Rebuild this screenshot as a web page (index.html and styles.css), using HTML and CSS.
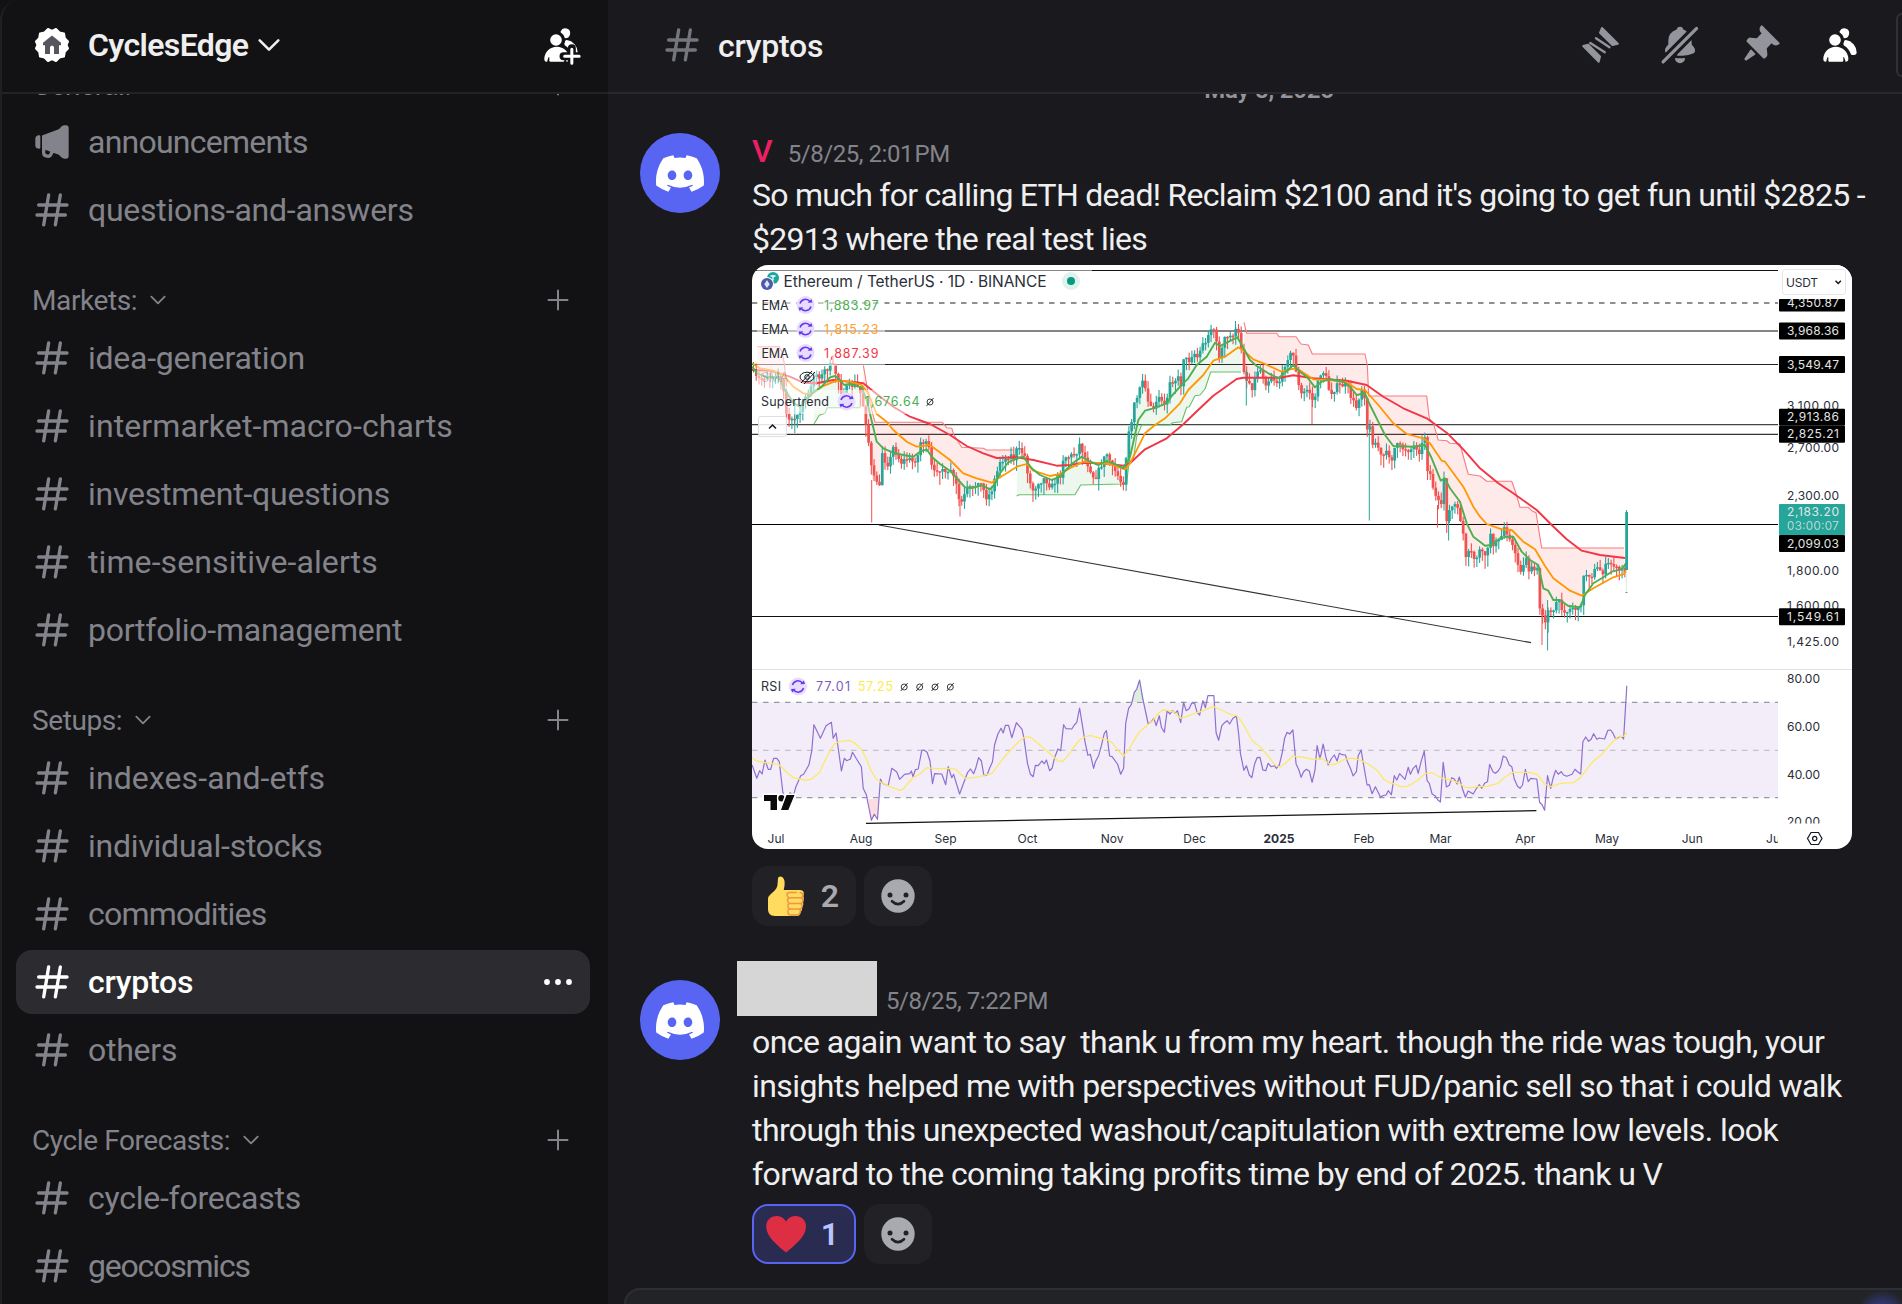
FILE: index.html
```html
<!DOCTYPE html>
<html lang="en">
  <head>
    <meta charset="utf-8">
    <title>CyclesEdge - cryptos</title>
    <link rel="stylesheet" href="styles.css">
  </head>
  <body>
    <!-- shared icons -->
    <svg class="defs" width="0" height="0">
      <symbol id="hash" viewBox="0 0 24 24"><path fill-rule="evenodd" d="M10.99 3.16A1 1 0 1 0 9 2.84L8.15 8H4a1 1 0 0 0 0 2h3.82l-.67 4H3a1 1 0 1 0 0 2h3.82l-.8 4.84a1 1 0 0 0 1.97.32L8.85 16h4.97l-.8 4.84a1 1 0 0 0 1.97.32l.86-5.16H20a1 1 0 1 0 0-2h-3.82l.67-4H21a1 1 0 1 0 0-2h-3.82l.8-4.84a1 1 0 1 0-1.97-.32L15.15 8h-4.97l.8-4.84ZM14.15 14l.67-4H9.85l-.67 4h4.97Z"/></symbol>
      <symbol id="horn" viewBox="0 0 24 24"><path fill-rule="evenodd" d="M19.56 2a3 3 0 0 0-2.46 1.28 3.85 3.85 0 0 1-1.86 1.42l-8.9 3.18a.5.5 0 0 0-.34.47v10.09a3 3 0 0 0 2.27 2.9l.62.16c1.57.4 3.15-.56 3.55-2.12a.92.92 0 0 1 1.23-.63l2.36.94c.42.27.79.62 1.07 1.03A3 3 0 0 0 19.56 22h.94c.83 0 1.5-.67 1.5-1.5v-17c0-.83-.67-1.5-1.5-1.5h-.94Zm-8.53 15.8L8 16.7v1.73a1 1 0 0 0 .76.97l.62.15c.5.13 1-.17 1.12-.67.1-.41.29-.78.53-1.1Z"/><path d="M2 10c0-1.1.9-2 2-2h.5c.28 0 .5.22.5.5v7a.5.5 0 0 1-.5.5H4a2 2 0 0 1-2-2v-4Z"/></symbol>
      <symbol id="members" viewBox="0 0 24 24"><path d="M14.5 8a3 3 0 1 0-2.7-4.3c-.2.4.06.86.44 1.12a5 5 0 0 1 2.14 3.08c.01.06.06.1.12.1ZM18.44 17.27c.15.43.54.73 1 .73h1.06c.83 0 1.5-.67 1.5-1.5a7.5 7.5 0 0 0-6.5-7.43c-.55-.08-.99.38-1.1.92-.06.3-.15.6-.26.87-.23.58-.05 1.3.47 1.63a9.53 9.53 0 0 1 3.83 4.78ZM12.5 9a3.5 3.5 0 1 1-7 0 3.5 3.5 0 0 1 7 0ZM2 20.5a7.5 7.5 0 0 1 15 0c0 .83-.67 1.5-1.5 1.5a.2.2 0 0 1-.2-.16c-.2-.96-.56-1.87-.88-2.54-.1-.23-.42-.15-.42.1v2.1a.5.5 0 0 1-.5.5h-8a.5.5 0 0 1-.5-.5v-2.1c0-.25-.31-.33-.42-.1-.32.67-.67 1.58-.88 2.54a.2.2 0 0 1-.2.16A1.5 1.5 0 0 1 2 20.5Z"/></symbol>
      <symbol id="plus" viewBox="0 0 24 24"><path d="M12 2.500v19M2.500 12h19" fill="none" stroke="currentColor" stroke-width="2" stroke-linecap="round"/></symbol>
      <symbol id="chevron" viewBox="0 0 24 24"><path d="M4 8l8 8 8-8" fill="none" stroke="currentColor" stroke-width="2.200" stroke-linecap="round" stroke-linejoin="round"/></symbol>
      <symbol id="discord" viewBox="0 0 127.14 96.36"><path d="M107.7,8.07A105.15,105.15,0,0,0,81.47,0a72.06,72.06,0,0,0-3.36,6.83A97.68,97.68,0,0,0,49,6.83,72.37,72.37,0,0,0,45.64,0,105.89,105.89,0,0,0,19.39,8.09C2.79,32.65-1.71,56.6.54,80.21h0A105.73,105.73,0,0,0,32.71,96.36,77.7,77.7,0,0,0,39.6,85.25a68.42,68.42,0,0,1-10.85-5.18c.91-.66,1.8-1.34,2.66-2a75.57,75.57,0,0,0,64.32,0c.87.71,1.76,1.39,2.66,2a68.68,68.68,0,0,1-10.87,5.19,77,77,0,0,0,6.89,11.1A105.25,105.25,0,0,0,126.6,80.22h0C129.24,52.84,122.09,29.11,107.7,8.07ZM42.45,65.69C36.18,65.69,31,60,31,53s5-12.74,11.43-12.74S54,46,53.89,53,48.84,65.69,42.45,65.69Zm42.24,0C78.41,65.69,73.25,60,73.25,53s5-12.74,11.44-12.74S96.23,46,96.12,53,91.08,65.69,84.69,65.69Z"/></symbol>
      <symbol id="smile" viewBox="-20 -20 40 40"><circle r="16.700" fill="#a9a9b0"/><g fill="#222226"><circle cx="-8" cy="-1" r="2.500"/><circle cx="8" cy="-1" r="2.500"/></g><path d="M-6 5.200Q0 11 6 5.200" fill="none" stroke="#222226" stroke-width="2.600" stroke-linecap="round"/></symbol>
      <symbol id="sync" viewBox="-10 -10 20 20"><circle r="9" fill="#e6dcfd"/><path d="M-5.500-1.500A5.600 5.600 0 0 1 4.500-3.200M5.500 1.500A5.600 5.600 0 0 1-4.500 3.200" fill="none" stroke="#6a35f0" stroke-width="1.500"/><path d="M7-2.500l-4.800.2 3.600-3.600zM-7 2.500l4.800-.2-3.600 3.600z" fill="#6a35f0"/></symbol>
    </svg>

    <div class="app">
      <nav class="sidebar">
        <header class="server">
          <svg class="badge" viewBox="0 0 36 36">
            <path fill="#fff" stroke="#fff" stroke-width="2" stroke-linejoin="round" d="M14 2l4 2 4-2 3.500 3.500 4.500 1 .8 4.700L34 14.500 32.500 18l1.500 3.500-3.200 3.300-.8 4.700-4.500 1L22 34l-4-2-4 2-3.500-3.500-4.500-1-.8-4.700L2 21.500 3.500 18 2 14.500l3.200-3.300.8-4.700 4.500-1z"/>
            <path fill="#55555f" d="M18 8.500l9 7.300v2.400h-2V27h-5v-6.500c0-2.300-4-2.300-4 0V27h-5v-8.800H9v-2.400z"/>
          </svg>
          <span class="server-name">CyclesEdge</span>
          <svg class="server-chevron"><use href="#chevron"/></svg>
          <svg class="icon invite" viewBox="0 0 24 24">
            <mask id="cut"><rect width="24" height="24" fill="#fff"/><path d="M18.500 14v10M13.500 18.700h10" stroke="#000" stroke-width="4.800" stroke-linecap="round"/></mask>
            <use href="#members" mask="url(#cut)"/>
            <path d="M18.500 14.500v8.500M14.200 18.700h8.700" stroke="currentColor" stroke-width="1.800" stroke-linecap="round"/>
          </svg>
        </header>
        <div class="channels">
          <div class="category"><span>General:</span><svg class="cat-chevron"><use href="#chevron"/></svg><svg class="add"><use href="#plus"/></svg></div>
          <a class="channel tight"><svg class="icon"><use href="#horn"/></svg>announcements</a>
          <a class="channel"><svg class="icon"><use href="#hash"/></svg>questions-and-answers</a>

          <div class="category"><span>Markets:</span><svg class="cat-chevron"><use href="#chevron"/></svg><svg class="add"><use href="#plus"/></svg></div>
          <a class="channel"><svg class="icon"><use href="#hash"/></svg>idea-generation</a>
          <a class="channel wide"><svg class="icon"><use href="#hash"/></svg>intermarket-macro-charts</a>
          <a class="channel"><svg class="icon"><use href="#hash"/></svg>investment-questions</a>
          <a class="channel wide"><svg class="icon"><use href="#hash"/></svg>time-sensitive-alerts</a>
          <a class="channel"><svg class="icon"><use href="#hash"/></svg>portfolio-management</a>

          <div class="category"><span>Setups:</span><svg class="cat-chevron"><use href="#chevron"/></svg><svg class="add"><use href="#plus"/></svg></div>
          <a class="channel wide"><svg class="icon"><use href="#hash"/></svg>indexes-and-etfs</a>
          <a class="channel"><svg class="icon"><use href="#hash"/></svg>individual-stocks</a>
          <a class="channel tight"><svg class="icon"><use href="#hash"/></svg>commodities</a>
          <a class="channel active"><svg class="icon"><use href="#hash"/></svg>cryptos
            <svg class="more" viewBox="0 0 28 8"><circle cx="3" cy="4" r="2.900"/><circle cx="14" cy="4" r="2.900"/><circle cx="25" cy="4" r="2.900"/></svg></a>
          <a class="channel"><svg class="icon"><use href="#hash"/></svg>others</a>

          <div class="category"><span>Cycle Forecasts:</span><svg class="cat-chevron"><use href="#chevron"/></svg><svg class="add"><use href="#plus"/></svg></div>
          <a class="channel"><svg class="icon"><use href="#hash"/></svg>cycle-forecasts</a>
          <a class="channel tighter"><svg class="icon"><use href="#hash"/></svg>geocosmics</a>
        </div>
      </nav>

      <main class="chat">
        <header class="topbar">
          <svg class="icon muted"><use href="#hash"/></svg>
          <h1>cryptos</h1>
          <div class="tools">
            <svg class="icon" viewBox="4 4 40 40">
              <g stroke="currentColor" stroke-linejoin="round" stroke-linecap="round">
                <path stroke-width="2" d="M26 7l15.800 15.800-5.300 1.200L24 11.800zM7.200 25l15.500 15.800 1.300-5.300-11.800-11.700z"/>
                <path fill="none" stroke-width="2.300" d="M20 17.200l13.500 9M14.300 22l14.500 9.200"/>
              </g>
            </svg>
            <svg class="icon" viewBox="0 0 24 24"><path d="M1.300 21.300a1 1 0 1 0 1.400 1.400l20-20a1 1 0 0 0-1.400-1.400l-20 20ZM3.130 16.130c.11.27.46.28.66.08L15.730 4.270a.47.47 0 0 0-.07-.74 6.970 6.970 0 0 0-1.350-.64.62.62 0 0 1-.38-.43 2 2 0 0 0-3.860 0 .62.62 0 0 1-.38.43A7 7 0 0 0 5 9.500v2.090a.5.5 0 0 1-.13.33l-1.100 1.220A3 3 0 0 0 3 15.150v.28c0 .24.04.48.13.7ZM18.640 9.360c.13-.13.36-.05.36.14v2.090c0 .12.05.24.13.33l1.100 1.220a3 3 0 0 1 .77 2.010v.28c0 .67-.34 1.290-.95 1.560-1.310.6-4 1.510-8.050 1.510-.46 0-.9-.01-1.330-.03a.48.48 0 0 1-.3-.83l8.270-8.280ZM9.180 19.840A.16.16 0 0 0 9 20a3 3 0 1 0 6 0c0-.1-.09-.17-.18-.16a24.840 24.840 0 0 1-5.640 0Z"/></svg>
            <svg class="icon" viewBox="0 0 24 24"><path d="M19.380 11.380a3 3 0 0 0 4.240 0l.03-.03a.5.5 0 0 0 0-.7L13.350.35a.5.5 0 0 0-.7 0l-.03.03a3 3 0 0 0 0 4.240L13 5l-2.920 2.920-3.650-.34a2 2 0 0 0-1.600.58l-.62.63a1 1 0 0 0 0 1.420l9.580 9.580a1 1 0 0 0 1.420 0l.63-.63a2 2 0 0 0 .58-1.600l-.34-3.640L19 11l.38.38ZM9.070 17.070a.5.5 0 0 1-.08.77l-5.150 3.430a.5.5 0 0 1-.63-.06l-.42-.42a.5.5 0 0 1-.06-.63L6.160 15a.5.5 0 0 1 .77-.08l2.140 2.140Z"/></svg>
            <svg class="icon on"><use href="#members"/></svg>
            <div class="search"></div>
          </div>
        </header>

        <section class="messages">
          <div class="divider">May 8, 2025</div>

          <article class="message">
            <div class="avatar"><svg><use href="#discord"/></svg></div>
            <div class="body">
              <div class="meta"><span class="author">V</span><time>5/8/25, 2:01 <span class="pm">PM</span></time></div>
              <p class="short">So much for calling ETH dead! Reclaim $2100 and it's going to get fun until $2825 -<br>$2913 where the real test lies</p>

              <svg class="chart" viewBox="752 265 1100 584">
                <g id="plot"></g>

                <!-- legend -->
                <g fill="#fff" fill-opacity=".5">
                  <rect x="757" y="268" width="335" height="25"/>
                  <rect x="757" y="294" width="128" height="72"/>
                  <rect x="757" y="366" width="60" height="24"/>
                  <rect x="757" y="390" width="183" height="24"/>
                </g>
                <circle cx="773" cy="278" r="6" fill="#1ba79b"/>
                <path d="M770.500 276h5M773 276v4.500" stroke="#fff" stroke-width="1.300"/>
                <circle cx="767" cy="284" r="7" fill="#fff"/>
                <circle cx="767" cy="284" r="6" fill="#4d5aa8"/>
                <path d="M767 280l2.700 4.200-2.700 3.800-2.700-3.800z" fill="#dfe3fa"/>
                <text class="pair" x="783.500" y="287" textLength="263">Ethereum / TetherUS · 1D · BINANCE</text>
                <circle cx="1071" cy="281" r="9" fill="#dff2ee"/><circle cx="1071" cy="281" r="4" fill="#089981"/>

                <g class="legend">
                  <text x="761.500" y="310" textLength="27">EMA</text>
                  <text x="761.500" y="334" textLength="27">EMA</text>
                  <text x="761.500" y="358" textLength="27">EMA</text>
                  <text x="761.500" y="382" textLength="27" opacity=".25">SMA</text>
                  <text x="761" y="406.300" textLength="68">Supertrend</text>
                  <text x="761" y="691" textLength="20">RSI</text>
                  <text class="up" x="824" y="310" textLength="54.500">1,883.97</text>
                  <text class="mid" x="824" y="334" textLength="54.500">1,815.23</text>
                  <text class="down" x="824" y="358" textLength="54.500">1,887.39</text>
                  <text class="up" x="864.500" y="406.300" textLength="55">1,676.64</text>
                  <text class="rsi" x="816" y="691" textLength="34">77.01</text>
                  <text class="rsi-ma" x="858" y="691" textLength="35">57.25</text>
                </g>
                <g id="empties" fill="none" stroke="#3a3c44"></g>
                <use href="#sync" x="795.500" y="295" width="20" height="20"/>
                <use href="#sync" x="795.500" y="319" width="20" height="20"/>
                <use href="#sync" x="795.500" y="343" width="20" height="20"/>
                <use href="#sync" x="836.500" y="391.500" width="20" height="20"/>
                <use href="#sync" x="788" y="676.500" width="20" height="20"/>
                <g fill="none" stroke="#131722"><ellipse cx="807" cy="377" rx="7" ry="4.800"/><circle cx="807" cy="377" r="2.300"/><path d="M801 383l11-12M804 384l11-12"/></g>
                <rect x="758.500" y="416.500" width="28" height="20" rx="2" fill="#fff" fill-opacity=".85" stroke="#dedee3"/>
                <path d="M769 428.500l3.500-3.500 3.500 3.500" fill="none" stroke="#131722" stroke-width="1.500"/>

                <!-- price axis -->
                <rect x="1778" y="265" width="74" height="404" fill="#fff"/>
                <g class="axis">
                  <text x="1787" y="409.500" textLength="52">3,100.00</text>
                  <text x="1787" y="451.500" textLength="52">2,700.00</text>
                  <text x="1787" y="500" textLength="52">2,300.00</text>
                  <text x="1787" y="575" textLength="52">1,800.00</text>
                  <text x="1787" y="610" textLength="52">1,600.00</text>
                  <text x="1787" y="645.500" textLength="52">1,425.00</text>
                  <text x="1787" y="682.500" textLength="33">80.00</text>
                  <text x="1787" y="730.500" textLength="33">60.00</text>
                  <text x="1787" y="778.500" textLength="33">40.00</text>
                  <text x="1787" y="826" textLength="33">20.00</text>
                </g>
                <rect x="1780" y="823.500" width="60" height="6" fill="#fff"/>
                <g fill="#000">
                  <rect x="1779" y="299" width="66" height="12.500" rx="1"/>
                  <rect x="1779" y="322.500" width="66" height="17" rx="1"/>
                  <rect x="1779" y="356" width="66" height="17" rx="1"/>
                  <rect x="1779" y="408.700" width="66" height="17" rx="1"/>
                  <rect x="1779" y="425.700" width="66" height="17" rx="1"/>
                  <rect x="1779" y="535" width="66" height="17" rx="1"/>
                  <rect x="1779" y="608.300" width="66" height="17" rx="1"/>
                  <rect x="1779" y="504" width="66" height="31" rx="1" fill="#26a69a"/>
                </g>
                <clipPath id="top"><rect x="1779" y="299" width="66" height="14"/></clipPath>
                <g class="axis tag">
                  <text x="1787" y="306.500" textLength="52" clip-path="url(#top)">4,350.87</text>
                  <text x="1787" y="335" textLength="52">3,968.36</text>
                  <text x="1787" y="368.500" textLength="52">3,549.47</text>
                  <text x="1787" y="421" textLength="52">2,913.86</text>
                  <text x="1787" y="438" textLength="52">2,825.21</text>
                  <text x="1787" y="516" textLength="52">2,183.20</text>
                  <text x="1787" y="530" textLength="52" opacity=".75">03:00:07</text>
                  <text x="1787" y="547.500" textLength="52">2,099.03</text>
                  <text x="1787" y="620.500" textLength="52">1,549.61</text>
                </g>
                <rect x="1782.500" y="269.500" width="63" height="25" rx="3" fill="#fff" stroke="#e6e6ea"/>
                <text class="axis" x="1786" y="286.700" textLength="32">USDT</text>
                <path d="M1835.500 280.800l2.700 2.700 2.700-2.700" fill="none" stroke="#131722" stroke-width="1.500"/>

                <!-- time axis -->
                <clipPath id="right"><rect x="1700" y="825" width="78" height="24"/></clipPath>
                <g class="axis months">
                  <text x="776" y="843">Jul</text><text x="861" y="843">Aug</text><text x="945.500" y="843">Sep</text>
                  <text x="1027.500" y="843">Oct</text><text x="1112" y="843">Nov</text><text x="1194.500" y="843">Dec</text>
                  <text x="1279" y="843" font-weight="700">2025</text><text x="1364" y="843">Feb</text><text x="1440.500" y="843">Mar</text>
                  <text x="1525.300" y="843">Apr</text><text x="1607" y="843">May</text><text x="1692.300" y="843">Jun</text>
                  <text x="1774.500" y="843" clip-path="url(#right)">Jul</text>
                </g>
                <g fill="none" stroke="#131722" stroke-width="1.200"><path d="M1811 832.500h7.500l3.500 6-3.500 6h-7.500l-3.500-6z"/><circle cx="1814.700" cy="838.500" r="2.100"/></g>

                <g fill="#0b0b0b" stroke="#fff" stroke-width="3" paint-order="stroke">
                  <path d="M764 795h13v15h-6.500v-9H764z"/><circle cx="781.500" cy="798.300" r="3.200"/><path d="M786.500 795h8l-6.200 15h-7.300z"/>
                </g>
              </svg>

              <div class="reactions">
                <div class="reaction">
                  <svg class="emoji" viewBox="0 0 40 42">
                    <path fill="#ffdb5e" d="M11 3.500C11.500.5 16.500.8 17.500 6c.5 3-.2 6.500-.8 9H33c4 0 5 4 2.500 5.800 2 1.500 1.800 4.500-.3 5.700 1.800 1.500 1.500 4.500-.7 5.700 1.200 1.800.5 4-1.500 4.800.5 2.500-.8 4-3 4H8C3 41 1 38 1 34V24c0-4 5-5.500 8.500-11C11 10.500 10.500 6.500 11 3.500z"/>
                    <path fill="none" stroke="#ee9547" stroke-width="1.500" d="M30 17.500h-8c-3 1-2.500 4.500.5 5.300h11c4-.5 3.500-5-1-5.300M33.500 22.800h-11c-3 1-2.500 5 .5 5.600h10.500c3.500-.8 3-5.300 0-5.600M33 28.400H22.500c-2.500 1-2 5 .5 5.600h10c3-.8 2.700-5.200 0-5.600M32 34h-9.500c-2.500 1-2 5.500.5 6h7.500c3.500-.6 3.500-5.500 1.500-6"/>
                  </svg>
                  <b>2</b>
                </div>
                <div class="reaction"><svg class="add-reaction"><use href="#smile"/></svg></div>
              </div>
            </div>
          </article>

          <article class="message">
            <div class="avatar"><svg><use href="#discord"/></svg></div>
            <div class="body">
              <div class="meta hidden-author"><time>5/8/25, 7:22 <span class="pm">PM</span></time></div>
              <p>once again want to say&nbsp; thank u from my heart. though the ride was tough, your<br>insights helped me with perspectives without FUD/panic sell so that i could walk<br>through this unexpected washout/capitulation with extreme low levels. look<br>forward to the coming taking profits time by end of 2025. thank u V</p>
              <div class="reactions">
                <div class="reaction mine">
                  <svg class="emoji" viewBox="0 0 40 42"><path fill="#dd2e44" d="M20 39.500C11 32 .2 23.500.2 13.500.2 2 14.500-.5 20 8.500 25.500-.5 40 2 40 13.500 40 23.500 29 32 20 39.500z"/></svg>
                  <b>1</b>
                </div>
                <div class="reaction"><svg class="add-reaction"><use href="#smile"/></svg></div>
              </div>
            </div>
          </article>
        </section>

        <footer class="composer"></footer>
      </main>
    </div>
    <script src="chart.js"></script>
  </body>
</html>
```
FILE: styles.css
```css
* {
  box-sizing: border-box;
}

body {
  margin: 0;
  background: #121214;
  font-family: Roboto, "Noto Sans", sans-serif;
  font-size: 32px;
  color: #efeff0;
  overflow: hidden;
}

svg {
  display: block;
  flex: none;
  fill: currentColor;
}

.defs {
  position: absolute;
}

.app {
  display: flex;
  height: 1304px;
}

.icon {
  width: 40px;
  height: 40px;
}

/* sidebar */
.sidebar {
  width: 608px;
  flex: none;
  display: flex;
  flex-direction: column;
  border-left: 2px solid #202024;
  border-top-left-radius: 20px;
  background: #121214;
}

.server {
  height: 94px;
  flex: none;
  display: flex;
  align-items: center;
  padding: 0 27px 2px 32px;
  border-bottom: 2px solid #232327;
}

.badge {
  width: 36px;
  height: 36px;
}

.server-name {
  margin-left: 18px;
  font-weight: 600;
  letter-spacing: -0.6px;
}

.server-chevron {
  width: 28px;
  height: 28px;
  margin-left: 7px;
}

.invite {
  margin-left: auto;
  color: #fff;
}

.channels {
  flex: 1;
  display: flex;
  flex-direction: column;
  overflow: hidden;
  padding: 0 18px 0 14px;
}

.category {
  height: 80px;
  flex: none;
  padding: 32px 16px 0;
  display: flex;
  align-items: center;
  color: #83838b;
  font-size: 28px;
  letter-spacing: -0.4px;
}

.category:first-child {
  margin-top: -65px;
  margin-bottom: -1px;
}

.cat-chevron {
  width: 20px;
  height: 20px;
  margin-left: 11px;
}

.add {
  width: 24px;
  height: 24px;
  margin-left: auto;
  margin-right: 4px;
}

.channel {
  height: 64px;
  flex: none;
  margin: 2px 0;
  padding: 0 18px 0 16px;
  border-radius: 16px;
  display: flex;
  align-items: center;
  color: #83838b;
  letter-spacing: -0.24px;
}

.channel.wide {
  letter-spacing: 0.1px;
}

.channel.tight {
  letter-spacing: -0.76px;
}

.channel.tighter {
  letter-spacing: -1.2px;
}

.channel .icon {
  margin-right: 16px;
}

.channel.active {
  background: #2c2c30;
  color: #fff;
  font-weight: 500;
}

.more {
  width: 28px;
  height: 8px;
  margin-left: auto;
}

/* chat */
.chat {
  flex: 1;
  min-width: 0;
  display: flex;
  flex-direction: column;
  background: #1a1a1e;
}

.topbar {
  height: 94px;
  flex: none;
  display: flex;
  align-items: center;
  padding: 0 0 2px 54px;
  border-bottom: 2px solid #29292d;
}

.topbar h1 {
  margin: 1px 0 0 16px;
  font-size: 32px;
  font-weight: 500;
  letter-spacing: -0.24px;
}

.muted {
  color: #75757e;
}

.tools {
  margin-left: auto;
  display: flex;
  align-items: center;
  gap: 40px;
  color: #94949c;
}

.tools .on {
  color: #fff;
}

.search {
  width: 6px;
  height: 64px;
  margin-left: -4px;
  border: 2px solid #303035;
  border-right: 0;
  border-radius: 16px 0 0 16px;
}

.messages {
  flex: 1;
  overflow: hidden;
}

.divider {
  height: 34px;
  margin: -21px 0 21px 28px;
  line-height: 34px;
  text-align: center;
  font-size: 24px;
  font-weight: 600;
  letter-spacing: -0.2px;
  color: #94949c;
}

.message {
  display: flex;
  gap: 32px;
  padding-left: 32px;
  margin-bottom: 49px;
}

.avatar {
  width: 80px;
  height: 80px;
  flex: none;
  margin-top: 5px;
  border-radius: 50%;
  background: #5865f2;
  color: #fff;
  display: flex;
  align-items: center;
  justify-content: center;
}

.avatar svg {
  width: 48px;
  height: 37px;
}

.body {
  padding-top: 1px;
}

.meta {
  height: 44px;
  line-height: 44px;
  white-space: nowrap;
}

.author {
  color: #ed1f63;
  font-weight: 500;
  margin-right: 15px;
}

time {
  font-size: 24px;
  letter-spacing: -0.45px;
  color: #83838b;
}

.pm {
  margin-left: -4px;
}

/* the name is covered by a plain block */
.hidden-author {
  position: relative;
  padding-left: 134px;
}

.hidden-author::before {
  content: "";
  position: absolute;
  left: -15px;
  top: -15px;
  width: 140px;
  height: 55px;
  background: #d6d6d6;
}

.body p {
  margin: 0;
  line-height: 44px;
  letter-spacing: -0.59px;
  white-space: nowrap;
}

.body .short {
  letter-spacing: -0.73px;
}

.chart {
  width: 1100px;
  height: 584px;
  margin-top: 4px;
  border-radius: 16px;
  background: #fff;
}

.reactions {
  display: flex;
  gap: 8px;
  margin-top: 8px;
}

.chart + .reactions {
  margin-top: 17px;
}

.reaction {
  height: 60px;
  width: 68px;
  border: 2px solid #222226;
  border-radius: 16px;
  background: #222226;
  display: flex;
  align-items: center;
  justify-content: center;
}

.reaction:first-child {
  width: 104px;
  justify-content: space-between;
  padding: 0 15px 0 13px;
}

.reaction b {
  font-weight: 600;
  color: #a9a9b0;
}

.reaction.mine {
  background: #292b50;
  border-color: #5865f2;
  padding-left: 12px;
}

.mine b {
  color: #b9c4ff;
}

.emoji {
  width: 40px;
  height: 42px;
}

.add-reaction {
  width: 40px;
  height: 40px;
}

.composer {
  height: 16px;
  margin-left: 16px;
  border: 2px solid #2e2f33;
  border-bottom: 0;
  border-right: 0;
  border-radius: 16px 0 0 0;
  background: radial-gradient(circle at 1256px 26px, #3c4596 0, #2f3568 14px, #222327 26px);
}

/* chart */
.chart text {
  font-family: Inter, sans-serif;
  fill: #2a2e39;
}

.chart .pair {
  font-size: 15.5px;
}

.chart .legend text {
  font-size: 12.5px;
}

.chart .legend .up { fill: #4caf50; }
.chart .legend .mid { fill: #ff9e1f; }
.chart .legend .down { fill: #f23645; }
.chart .legend .rsi { fill: #7e57c2; }
.chart .legend .rsi-ma { fill: #ffe94a; }

.chart .axis,
.chart .axis text {
  font-size: 12px;
}

.chart .tag text {
  fill: #e4e4e4;
}

.chart .months text {
  text-anchor: middle;
}
```
FILE: chart.js
```js
const plot = document.querySelector('#plot');
const GREEN = '#26a69a';
const RED = '#ef5350';

// every series is stored in sections: origin x, origin y, x scale, then the points
const toPoints = (sections) => {
  const out = [];
  sections.forEach(([ox, oy, sx, str]) => {
    str.trim().split(/\s+/).forEach((pair) => {
      const [x, y] = pair.split(',').map(Number);
      out.push([ox + x * sx, oy + y / 3]);
    });
  });
  return out;
};

const T = 1 / 3;
const R = 0.35714;
const A = (s) => [750, 260, T, s];
const B = (s) => [1130, 290, T, s];
const C = (s) => [1480, 400, T, s];
const R1 = (s) => [750, 660, R, s];
const R2 = (s) => [1300, 660, R, s];

const add = (tag, attrs) => {
  const el = document.createElementNS('http://www.w3.org/2000/svg', tag);
  Object.keys(attrs).forEach((k) => el.setAttribute(k, attrs[k]));
  plot.appendChild(el);
  return el;
};
const str = (pts) => pts.map((p) => p[0].toFixed(1) + ',' + p[1].toFixed(1)).join(' ');
const line = (pts, stroke, width) => add('polyline', { points: str(pts), fill: 'none', stroke, 'stroke-width': width, 'stroke-linejoin': 'round' });
const rule = (x1, y1, x2, y2, stroke, width, dash) => add('line', { x1, y1, x2, y2, stroke, 'stroke-width': width, 'stroke-dasharray': dash || 'none' });
const rect = (x, y, width, height, fill) => add('rect', { x, y, width, height, fill });

const price = toPoints([
  A('6,330 22,360 35,355 50,345 62,350 75,340 90,350 100,390 110,470 120,480 130,490 140,455 150,460 158,425 170,410 180,400 192,340 205,345 215,350 225,330 240,318 252,325 265,360 275,400 285,390 300,380 315,370 330,395 340,440 350,500 358,565 368,660 378,650 388,695 395,570 405,600 418,615 428,560 440,580 452,608 470,597 490,605 505,585 513,540 530,555 540,575 548,650 560,625 580,625 590,660 600,620 612,660 622,685 630,740 640,715 655,685 670,690 685,658 700,690 712,715 725,690 735,655 745,625 752,595 765,600 780,580 790,600 800,570 815,575 825,590 832,630 840,670 850,692 865,665 885,655 905,682 920,655 935,640 940,590 960,590 980,575 990,550 1000,580 1010,605 1025,635 1033,657 1045,635 1060,600 1072,580 1085,620 1100,640 1115,670 1125,660 1130,555 1138,500'),
  B('5,395 14,340 25,320 32,272 42,290 50,320 60,360 75,350 90,320 100,350 110,345 115,270 130,270 148,265 155,290 160,200 175,215 190,185 205,205 218,155 228,165 237,115 255,118 262,185 272,205 280,150 300,140 320,122 330,145 338,205 345,265 360,280 370,295 380,240 395,240 405,280 425,260 445,280 460,250 468,205 488,190 497,230 503,280 515,315 535,295 550,338 560,300 570,250 580,245 590,270 600,310 620,290 635,285 650,285 665,325 678,355 690,310 697,290 705,320 712,418 722,415 730,465 740,455 752,500 775,490 790,510 795,465 820,475 840,480 855,465 870,485 885,435 893,540 905,560 912,610 930,650 938,655 943,540 950,685 962,655 975,645 990,680 1000,735 1007,810 1020,785 1035,810'),
  C('0,450 10,470 25,450 32,395 40,430 60,425 72,380 90,410 105,465 120,510 130,500 137,462 147,510 160,510 172,512 180,630 195,650 200,695 207,580 215,665 230,600 245,620 260,635 280,620 300,635 310,535 320,520 335,525 350,505 370,515 380,495 400,490 410,510 432,510'),
]);

const priceAt = (x) => {
  for (let i = 1; i < price.length; i++) {
    if (price[i][0] >= x) {
      const [x0, y0] = price[i - 1];
      const [x1, y1] = price[i];
      return y0 + (y1 - y0) * (x - x0) / (x1 - x0 || 1);
    }
  }
  return price[price.length - 1][1];
};

// shade between a trend line and the price
const shade = (pts, fill) => {
  const from = pts[0][0];
  const to = pts[pts.length - 1][0];
  const back = price.filter((p) => p[0] > from && p[0] < to).reverse();
  add('polygon', { points: str([...pts, [to, priceAt(to)], ...back, [from, priceAt(from)]]), fill });
};

// horizontal levels
rule(752, 270.5, 1778, 270.5, '#111', 1);
rule(752, 303, 1778, 303, '#6b6b6b', 1.5, '5.500 5.500');
rule(752, 331, 1778, 331, '#5c5c5c', 1.6);
rule(752, 364.5, 1778, 364.5, '#222', 1);
rule(752, 424.6, 1778, 424.6, '#444', 1.4);
rule(752, 434.4, 1778, 434.4, '#333', 1.2);
rule(752, 524.5, 1778, 524.5, '#000', 1);
rule(752, 616.5, 1778, 616.5, '#111', 1);
rule(879, 525, 1531, 642.6, '#333', 1.1);
rule(752, 669.5, 1852, 669.5, '#e0e1ea', 1.2);

// supertrend
const down = [
  [A('22,260 88,260 96,275 103,310 110,380')],
  [A('340,315 358,420 375,487 577,487 590,503 605,505 612,525 635,562 700,565 710,570 790,570')],
  [B('342,97 350,130 440,130 447,140 498,140 513,162 535,165 547,192 705,192 712,225 716,318 890,318 898,385 910,400 925,450 950,452 960,460 990,462 1003,510 1015,553 1050,558'), C('20,244 95,244 108,280 120,322 145,322 155,332 168,338 178,400 185,444 432,444')],
];
const up = [
  [A('192,492 208,466 225,460 232,443 332,443')],
  [A('800,708 808,704 975,704 992,675 1115,672 1130,668 1138,600'), B('10,510 20,440 35,405 120,405 128,398 155,395 170,352 178,350 195,317 210,315 225,297 242,246 333,246')],
];
down.forEach((s) => { const p = toPoints(s); shade(p, 'rgba(255,82,82,.12)'); line(p, '#f77c80', 1.1); });
up.forEach((s) => { const p = toPoints(s); shade(p, 'rgba(76,175,80,.1)'); line(p, '#6abf6e', 1.1); });

// candles, one a day
let seed = 7;
const rnd = () => { seed = (seed * 16807) % 2147483647; return seed / 2147483647; };
let open = priceAt(752);
for (let x = 753.5; x < 1625; x += 2.74) {
  const close = priceAt(x) + (rnd() - 0.5) * 7;
  const color = close < open ? GREEN : RED;
  const top = Math.min(open, close);
  const h = Math.max(1.5, Math.abs(open - close));
  rect(x - 0.55, top - rnd() * 8, 1.1, h + 7 + rnd() * 7, color);
  rect(x - 1.35, top, 2.7, h, color);
  open = close;
}
// long wicks
[[871.7, 480, 522.5, RED], [960, 500, 516.5, RED], [794.8, 400, 433, GREEN], [1246.3, 370, 405.5, GREEN], [1312, 400, 424, RED],
  [1369.3, 425, 520.5, GREEN], [1437.5, 505, 527.5, RED], [1448.6, 510, 540.5, GREEN], [1542, 610, 645, RED], [1547.6, 600, 650.5, GREEN], [1235.5, 321, 335, GREEN]]
  .forEach(([x, y1, y2, c]) => rect(x - 0.5, y1, 1, y2 - y1, c));

// moving averages
line(toPoints([
  A('6,330 60,332 120,350 160,368 200,370 250,360 340,370 380,402 430,440 480,470 540,492 600,525 650,558 700,580 740,594 800,592 850,600 920,617 960,615 1000,608 1060,610 1120,617'),
  B('0,520 45,478 110,445 160,403 210,355 250,317 320,267 340,263 450,263 490,256 550,265 650,272 710,285 760,320 820,355 890,385 950,428 1000,478'),
  C('0,205 55,250 100,280 170,330 215,375 260,418 305,452 360,465 435,474'),
]), '#f23645', 1.9);
line(toPoints([
  A('6,310 30,325 70,332 100,345 130,380 160,400 185,402 215,380 260,362 300,365 335,375 355,400 380,462 410,485 430,510 470,545 500,560 540,555 560,570 600,600 640,640 680,655 725,668 745,655 770,640 800,620 830,612 850,632 900,648 930,642 960,625 1000,605 1030,608 1080,612 1125,628'),
  B('0,520 15,490 45,430 75,405 105,385 150,340 175,300 220,255 250,212 285,200 325,172 345,185 370,208 400,220 455,245 480,238 500,235 550,268 600,270 650,277 680,297 705,300 745,345 790,400 830,432 880,445 900,460 935,512 945,515 1000,590 1030,650'),
  C('0,350 20,372 65,388 95,390 130,425 165,448 195,498 220,535 270,572 305,587 340,565 400,532 432,522 440,505'),
]), '#ff9800', 1.8);
line(toPoints([
  A('6,320 22,340 40,348 88,355 105,390 130,428 150,440 168,420 195,393 215,380 240,352 255,348 270,360 283,375 300,372 335,382 350,420 362,470 380,545 400,565 430,578 460,585 490,590 510,575 530,568 545,590 570,612 600,632 625,660 645,682 665,684 695,676 720,688 735,672 750,640 775,607 800,595 820,590 845,625 870,645 905,660 930,650 945,633 970,608 995,590 1020,605 1045,615 1070,603 1095,612 1120,625 1135,600'),
  B('0,500 8,465 25,390 45,362 70,355 110,340 125,318 150,290 175,265 200,225 230,200 255,158 270,168 290,158 322,142 335,165 360,210 380,228 415,250 445,265 465,248 490,225 510,245 530,260 555,292 575,275 600,268 640,275 660,290 680,315 705,310 720,345 745,395 765,435 790,468 850,470 885,465 905,505 932,572 945,565 960,595 990,635 1010,700 1030,740'),
  C('0,425 15,437 35,435 60,415 80,410 100,410 125,455 150,480 175,495 190,565 205,572 220,600 240,600 265,618 300,622 315,585 340,550 365,535 395,515 425,508 438,490'),
]), '#4caf50', 1.9);

// today
rect(1625.2, 512, 2.8, 58, GREEN);
rect(1626, 510, 1, 3, GREEN);
rect(1626.2, 570, 0.7, 22, '#cfe9d0');
rect(1625.5, 592, 2, 1, '#4caf50');

// rsi
rect(752, 702.3, 1026, 95.4, '#f2edf9');
rule(752, 702.3, 1778, 702.3, '#9799a3', 1.2, '5.500 5.500');
rule(752, 750.3, 1778, 750.3, '#c2c2cb', 1.2, '5.500 5.500');
rule(752, 797.7, 1778, 797.7, '#9799a3', 1.2, '5.500 5.500');
add('polygon', { points: '868,799 871.4,820.3 874.3,814.3 877.5,819.3 879.2,799', fill: '#fbdcdf' });
add('polygon', { points: '1131.500,702 1139.600,680 1144.500,702', fill: '#dcefdf' });
line(toPoints([
  R1('6,315 19,355 27,332 34,342 42,300 51,328 58,328 66,295 75,295 82,305 92,398 100,420 112,398 122,405 128,382 142,347 150,343 165,315 173,272 179,194 197,235 213,197 228,187 233,235 241,219 256,333 264,295 271,302 281,297 287,277 297,295 312,320 317,385 326,405 340,481 348,463 357,478 365,357 371,370 387,377 397,325 411,336 419,358 433,343 447,341 452,333 456,350 463,329 471,327 481,271 487,270 496,277 504,303 511,371 517,341 537,342 548,374 555,320 565,353 570,343 587,402 603,355 609,338 617,327 626,341 632,325 640,293 648,303 655,347 664,345 671,325 679,305 685,254 694,222 703,205 709,219 715,196 724,196 733,233 746,188 762,208 767,235 777,310 785,343 793,350 799,316 807,317 817,303 824,311 830,300 839,332 846,325 853,293 862,267 870,272 878,194 885,206 901,207 908,195 915,187 923,144 938,245 946,286 953,283 962,325 967,305 976,287 984,257 992,220 998,212 1007,288 1014,290 1029,312 1038,343 1046,325 1052,190 1060,145 1068,133 1076,97 1083,87 1091,60 1099,112 1106,147 1115,192 1122,187 1131,175 1137,197 1146,167 1152,202 1160,217 1168,153 1176,162 1183,152 1190,160 1197,152 1206,188 1214,127 1221,152 1229,147 1237,129 1245,130 1252,157 1259,165 1268,122 1275,143 1282,107 1299,107 1305,218 1312,241 1321,197 1329,188 1336,182 1343,192 1352,175 1362,168 1368,220 1373,280 1383,331 1390,317 1398,345 1405,353 1413,312 1420,293 1428,292 1436,330 1444,332 1451,310 1459,320 1468,317 1474,325 1482,315 1490,280 1497,235 1504,217 1511,222 1520,210 1529,312 1537,330'),
  R2('3,352 10,335 18,328 26,333 34,367 42,330 48,257 56,297 65,252 72,290 79,315 87,297 96,285 104,303 110,280 118,284 127,285 133,305 141,325 149,348 158,335 163,287 171,270 179,320 188,375 194,374 202,401 211,380 218,395 225,411 232,407 241,405 247,392 256,404 264,347 271,360 279,341 294,358 303,322 309,343 317,325 325,316 331,340 339,305 348,273 356,362 362,370 370,402 378,407 386,420 393,426 401,307 410,381 418,376 425,353 432,357 440,372 446,351 455,387 463,412 471,393 485,402 493,387 502,374 509,385 517,370 525,365 531,313 540,335 547,340 555,333 562,320 569,288 578,293 586,315 593,320 600,357 609,379 616,385 623,375 631,328 639,365 646,355 663,357 671,427 678,434 685,451 693,347 702,385 709,353 716,331 723,343 731,335 738,345 747,349 762,343 770,328 777,335 786,342 792,245 800,231 808,244 815,238 822,221 831,238 838,234 853,237 862,211 870,210 877,221 884,237 894,230 901,230 906,237 915,77'),
]), '#8f6fcf', 1.2);
line(toPoints([
  R1('6,293 19,303 35,306 55,310 80,313 92,325 104,338 122,353 140,357 157,361 173,357 195,337 210,302 222,277 236,252 249,245 277,241 290,247 311,267 325,295 338,330 353,357 370,368 392,380 419,391 428,388 443,369 458,352 476,342 495,323 520,326 560,325 575,328 590,343 603,355 633,352 677,340 692,320 707,297 725,275 748,250 770,230 785,232 805,248 825,268 845,285 862,303 876,304 892,285 907,261 922,240 937,231 953,226 967,231 998,238 1014,248 1030,271 1046,288 1060,270 1075,242 1091,215 1110,198 1128,182 1143,160 1155,150 1168,151 1187,156 1205,175 1222,170 1245,160 1270,152 1297,139 1320,150 1345,163 1362,166 1375,182 1390,210 1407,243 1430,262 1452,290 1470,315 1484,321 1500,310 1520,287 1535,292'),
  R2('0,290 20,294 40,299 60,294 85,314 100,312 125,298 145,294 170,301 188,310 215,330 235,358 250,368 265,372 282,380 297,380 315,371 330,360 350,341 370,338 398,355 425,360 445,370 463,382 480,383 500,379 520,380 555,370 570,355 595,337 640,337 665,343 685,372 702,380 730,370 765,368 785,353 800,332 820,305 845,283 870,252 890,230 908,228 915,218'),
]), '#fde968', 1.3);
rule(866, 823.3, 1536.4, 810.6, '#111', 1.2);

// "no value" marks in the legends
const empties = document.querySelector('#empties');
[[930, 402], [904.2, 687], [919.7, 687], [935, 687], [950.3, 687]].forEach(([x, y]) => {
  empties.innerHTML += `<circle cx="${x}" cy="${y}" r="3"/><path d="M${x - 3.5} ${y + 4}l7-8"/>`;
});
```
